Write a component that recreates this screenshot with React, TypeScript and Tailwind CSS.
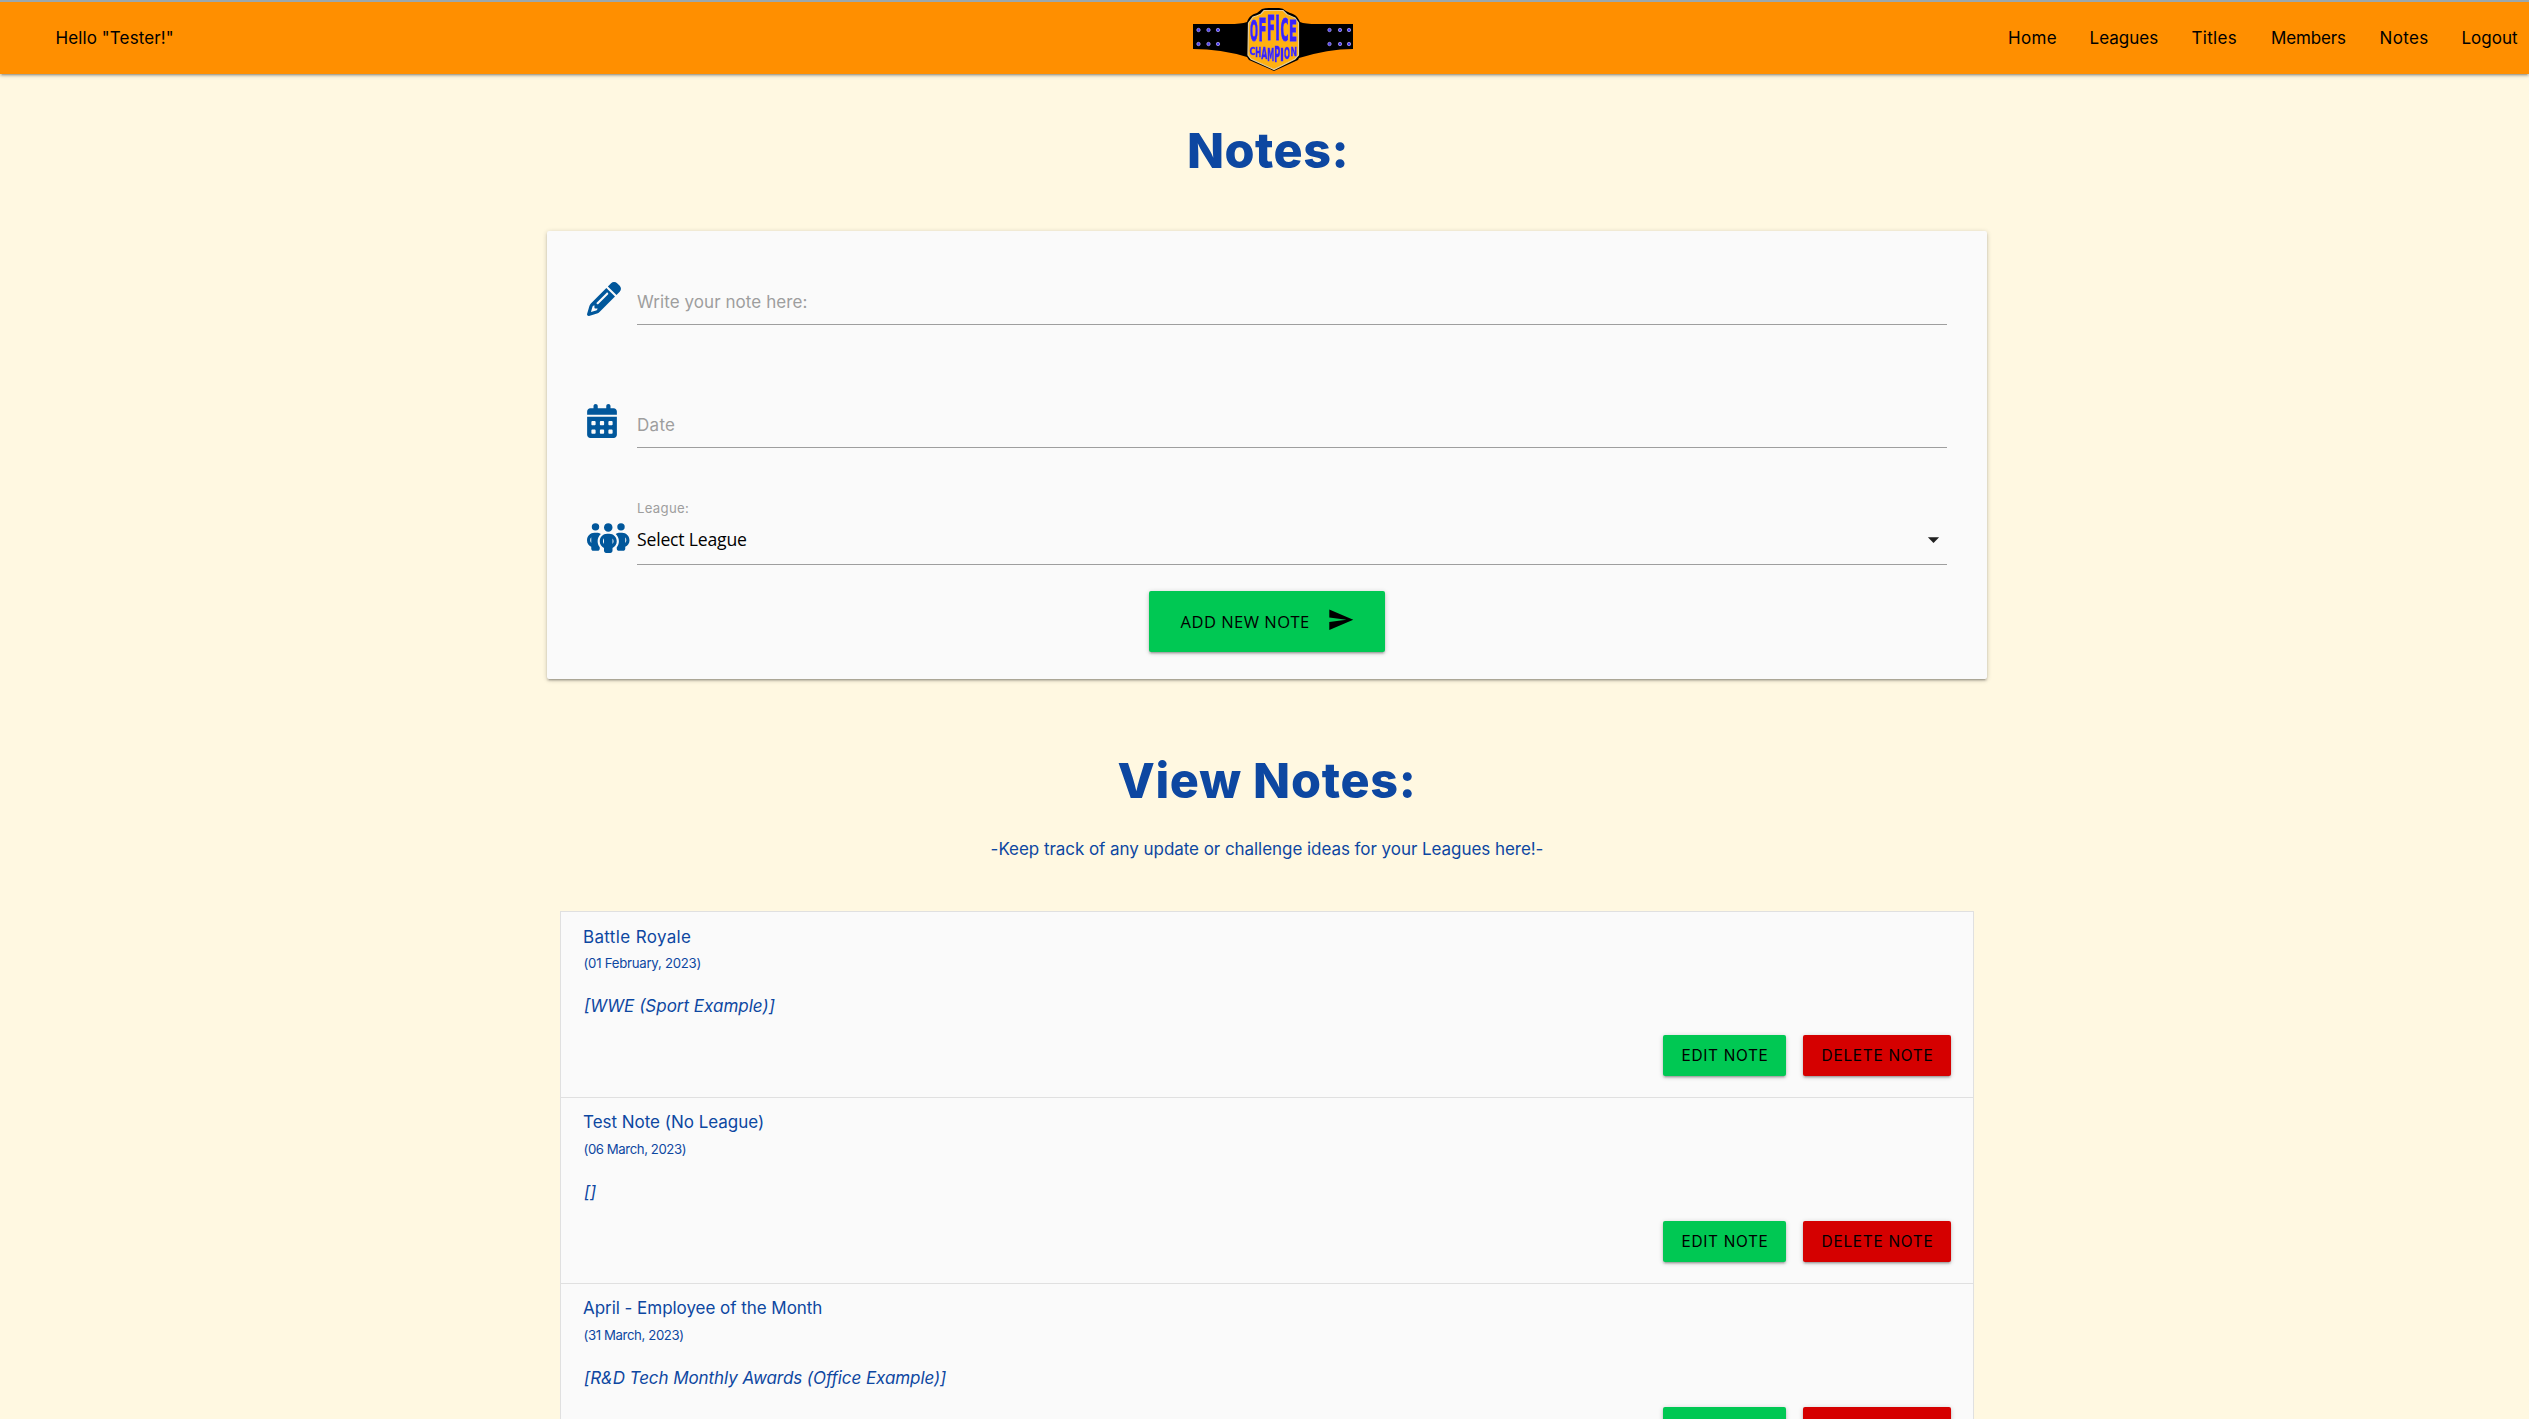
import { FaCalendarDays, FaPencil, FaPeopleGroup } from 'react-icons/fa6';
import { MdArrowDropDown, MdSend } from 'react-icons/md';

const links = [
  { label: 'Home', cls: 'w-[81.5px] tracking-[0.35px]' },
  { label: 'Leagues', cls: 'w-[102px] tracking-[0.02px]' },
  { label: 'Titles', cls: 'w-[79.5px] tracking-[0.3px]' },
  { label: 'Members', cls: 'w-[108.5px] tracking-[-0.13px]' },
  { label: 'Notes', cls: 'w-[82px] tracking-[0.35px]' },
  { label: 'Logout', cls: 'w-[67.5px]' },
];

const notes = [
  { title: 'Battle Royale', titleCls: 'pt-px -mb-px tracking-[0.35px]', date: '(01 February, 2023)', dateCls: 'tracking-[-0.25px]', league: '[WWE (Sport Example)]', leagueCls: 'tracking-[0px]' },
  { title: 'Test Note (No League)', titleCls: 'tracking-[-0.02px]', date: '(06 March, 2023)', dateCls: 'tracking-[-0.42px]', league: '[]', leagueCls: 'tracking-[-0.3px]' },
  { title: 'April - Employee of the Month', titleCls: 'tracking-[-0.04px]', date: '(31 March, 2023)', dateCls: 'tracking-[-0.38px]', league: '[R&D Tech Monthly Awards (Office Example)]', leagueCls: 'tracking-[-0.07px]' },
];

type Letter = [string, number, number, number, number];

// Letters of the belt plate: character, left, width, top and bottom edge.
const office: Letter[] = [
  ['O', 57, 8, 20, 40.5],
  ['F', 65.5, 8, 17.8, 40.5],
  ['F', 74, 8, 15.5, 39.5],
  ['I', 82.3, 4.6, 15.5, 39.5],
  ['C', 87.5, 8, 17.5, 40.5],
  ['E', 96, 8, 20, 40.5],
];
const champion: Letter[] = [
  ['C', 56.5, 6, 47, 55],
  ['H', 62.3, 6, 47, 57],
  ['A', 68.3, 6, 47, 58.5],
  ['M', 74.3, 7, 47, 60.5],
  ['P', 81.3, 6, 47, 62],
  ['I', 87.1, 4, 47, 60.5],
  ['O', 91, 6, 47, 58.5],
  ['N', 97.4, 6.6, 47, 56],
];
const studs = [5.5, 15.5, 25, 136.5, 147, 156];

function Letters({ items }: { items: Letter[] }) {
  return (
    <>
      {items.map(([ch, x, w, top, bottom], i) => (
        <text
          key={i}
          transform={`translate(${x} ${bottom}) scale(1 ${(bottom - top) / 7.3})`}
          textLength={w}
          lengthAdjust="spacingAndGlyphs"
          fontSize="10"
          fontWeight="700"
          fontFamily="'DejaVu Sans', sans-serif"
        >
          {ch}
        </text>
      ))}
    </>
  );
}

function Logo() {
  return (
    <svg width="160" height="72" viewBox="0 0 160 72" className="block">
      <g transform="translate(0 -2)">
        <path
          d="M0 24H36Q48 24 54 22C56 16 60 14 64 13L69 9Q72 8 76 8H86Q90 8 93 11L97 13C102 14 105 17 107 22Q112 24 124 24H160V49Q135 49 106 58L105 60L81 71L56 60L54 57Q28 49 0 49Z"
          fill="#000"
        />
        <path
          d="M55.5 23L60 17Q64 16 68 14L71 10.5H90L94 14.5Q98 16 102 18L105.5 23V55L102 59L81 69.5L58 59L55 55Z"
          fill="#ffb010"
          stroke="#e5cf9c"
          strokeWidth="1.2"
        />
        <g fill="#3a22fb" stroke="#3a22fb" strokeWidth="0.3" className="[filter:drop-shadow(0_0_0.6px_#c9bba8)]">
          <Letters items={office} />
          <Letters items={champion} />
        </g>
        {studs.map((x) => (
          <g key={x} fill="#4a3bf5" stroke="#a9a0e8" strokeWidth="0.8">
            <circle cx={x} cy="30" r="1.7" />
            <circle cx={x} cy="44" r="1.7" />
          </g>
        ))}
      </g>
    </svg>
  );
}

const raised =
  'shadow-[0_2px_2px_0_rgba(0,0,0,0.14),0_3px_1px_-2px_rgba(0,0,0,0.12),0_1px_5px_0_rgba(0,0,0,0.2)]';

export default function App() {
  return (
    <div className="h-[1419px] w-[2529px] overflow-hidden bg-[#fff8e1] font-['Inter',sans-serif] text-[17px] text-[#0d47a1]">
      <nav className={`flex h-[74px] items-start border-t-2 border-[#9aa8ae] bg-[#ff8f00] text-black ${raised}`}>
        <div className="w-[1193px] pl-[55.5px] leading-[73px] tracking-[0.1px]">Hello "Tester!"</div>
        <Logo />
        <ul className="ml-auto flex leading-[73px]">
          {links.map((l) => (
            <li key={l.label} className={l.cls}>{l.label}</li>
          ))}
        </ul>
      </nav>

      <main className="ml-[547px] w-[1440px]">
        <h1 className="mt-[47px] pl-[2px] text-center text-[48.5px] leading-[60px] font-extrabold tracking-[0.5px]">Notes:</h1>

        <form className={`mt-[50px] h-[448px] rounded-[2px] bg-[#fafafa] px-[40px] pt-[44px] ${raised}`}>
          <div className="flex h-[123px]">
            <div className="w-[50px] pt-[7px]"><FaPencil size={34} color="#01579b" /></div>
            <div className="h-[50px] flex-1 border-b border-[#9e9e9e] pt-[2px] leading-[50px] tracking-[0.07px] text-[#9e9e9e]">Write your note here:</div>
          </div>
          <div className="flex h-[102px]">
            <div className="w-[50px] pt-[6px]"><FaCalendarDays size={34} color="#01579b" className="-ml-[2px]" /></div>
            <div className="h-[50px] flex-1 border-b border-[#9e9e9e] pt-[2px] leading-[50px] tracking-[0.3px] text-[#9e9e9e]">Date</div>
          </div>
          <div className="flex h-[65px]">
            <div className="w-[50px] pt-[21px]"><FaPeopleGroup className="h-[34px] w-[42.5px]" color="#01579b" /></div>
            <div className="flex-1 border-b border-[#9e9e9e]">
              <div className="h-[16px] text-[13.2px] leading-[16px] tracking-[0.28px] text-[#9e9e9e]">League:</div>
              <div className="flex h-[47px] items-center justify-between font-['Open_Sans',sans-serif] text-[17.6px] tracking-[-0.19px] text-black">
                Select League
                <MdArrowDropDown size={27} color="#212121" />
              </div>
            </div>
          </div>
          <button type="button" className={`mx-auto mt-[26px] flex h-[61px] w-[236px] items-center rounded-[2px] bg-[#00c853] pt-px pl-[31.5px] font-['Open_Sans',sans-serif] text-[16.5px] tracking-[0.5px] whitespace-nowrap text-black ${raised}`}>
            ADD NEW NOTE
            <MdSend size={27.4} className="-mt-[4px] ml-[17px]" />
          </button>
        </form>

        <h1 className="mt-[72px] text-center text-[48.5px] leading-[60px] font-extrabold tracking-[0.72px]">View Notes:</h1>
        <p className="mt-[26px] text-center leading-[24px] tracking-[-0.05px]">-Keep track of any update or challenge ideas for your Leagues here!-</p>

        <ul className="mx-[13px] mt-[50px] border border-[#e0e0e0] bg-[#fafafa]">
          {notes.map((n) => (
            <li key={n.title} className="h-[186px] border-b border-[#e0e0e0] px-[22px] pt-[12px]">
              <div className={`leading-[24px] ${n.titleCls}`}>{n.title}</div>
              <div className={`mt-[3px] pl-[0.5px] text-[13.2px] leading-[24px] ${n.dateCls}`}>{n.date}</div>
              <div className={`mt-[19px] pl-[1px] leading-[25px] italic ${n.leagueCls}`}>{n.league}</div>
              <div className="mt-[16px] flex justify-end gap-[17px] text-[15.4px] leading-[41px] text-black">
                <button type="button" className={`h-[41px] w-[123px] rounded-[2px] bg-[#00c853] pl-px leading-[42px] tracking-[0.67px] ${raised}`}>EDIT NOTE</button>
                <button type="button" className={`h-[41px] w-[148px] rounded-[2px] bg-[#d50000] pl-px leading-[42px] tracking-[0.72px] ${raised}`}>DELETE NOTE</button>
              </div>
            </li>
          ))}
        </ul>
      </main>
    </div>
  );
}
